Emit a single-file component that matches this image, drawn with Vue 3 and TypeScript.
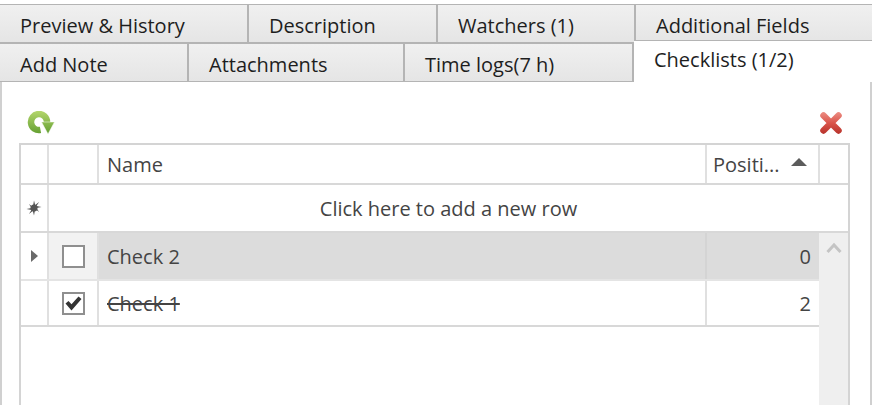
<script setup lang="ts">
interface Tab {
  label: string
  width: number
  active?: boolean
}

interface CheckRow {
  name: string
  position: number
  done: boolean
  current: boolean
}

const topTabs: Tab[] = [
  { label: 'Preview & History', width: 249 },
  { label: 'Description', width: 189 },
  { label: 'Watchers (1)', width: 198 },
  { label: 'Additional Fields', width: 236 },
]

const bottomTabs: Tab[] = [
  { label: 'Add Note', width: 189 },
  { label: 'Attachments', width: 216 },
  { label: 'Time logs(7 h)', width: 229 },
  { label: 'Checklists (1/2)', width: 238, active: true },
]

const rows: CheckRow[] = [
  { name: 'Check 2', position: 0, done: false, current: true },
  { name: 'Check 1', position: 2, done: true, current: false },
]
</script>

<template>
  <div class="page">
    <div class="tab-row">
      <div v-for="tab in topTabs" :key="tab.label" class="tab" :style="{ width: `${tab.width}px` }">
        {{ tab.label }}
      </div>
    </div>
    <div class="tab-row">
      <div
        v-for="tab in bottomTabs"
        :key="tab.label"
        class="tab"
        :class="{ 'tab--active': tab.active }"
        :style="{ width: `${tab.width}px` }"
      >
        {{ tab.label }}
      </div>
    </div>

    <div class="panel">
      <div class="toolbar">
        <svg class="icon-refresh" width="28" height="24" viewBox="0 0 28 24">
          <defs>
            <linearGradient id="greenFill" gradientUnits="userSpaceOnUse" x1="0" y1="0" x2="0" y2="24">
              <stop offset="0" stop-color="#b4d66c" />
              <stop offset="1" stop-color="#5f9c2e" />
            </linearGradient>
          </defs>
          <path
            d="M13.500 18.900A8 8 0 1 1 20 11"
            fill="none"
            stroke="url(#greenFill)"
            stroke-width="6.500"
          />
          <path d="M14.500 11h13L21 23z" fill="url(#greenFill)" stroke="#fff" stroke-width=".5" />
        </svg>
        <svg class="icon-delete" width="24" height="24" viewBox="0 0 24 24">
          <defs>
            <linearGradient id="redFill" gradientUnits="userSpaceOnUse" x1="0" y1="0" x2="0" y2="24">
              <stop offset="0" stop-color="#ee9389" />
              <stop offset=".5" stop-color="#da554b" />
              <stop offset="1" stop-color="#b42f28" />
            </linearGradient>
          </defs>
          <path
            d="M4.500 4.500l15 15M19.500 4.500l-15 15"
            fill="none"
            stroke="url(#redFill)"
            stroke-width="6.500"
            stroke-linecap="round"
          />
        </svg>
      </div>

      <div class="grid">
        <div class="head">
          <div class="cell cell--indicator" />
          <div class="cell cell--check" />
          <div class="cell cell--name">Name</div>
          <div class="cell cell--position">
            <span>Positi...</span>
            <i class="sort-arrow" />
          </div>
          <div class="cell cell--spare" />
        </div>

        <div class="new-row">
          <div class="cell cell--indicator">
            <svg width="16" height="16" viewBox="0 0 16 16">
              <path
                d="M8 .5l1.200 4.500 3.900-2.900-2.600 3.900 5 1-5 1 2.600 3.900-3.900-2.900L8 15.500 6.800 11l-3.900 2.900 2.600-3.900-5-1 5-1-2.600-3.900 3.900 2.900z"
                fill="#555"
              />
              <circle cx="8" cy="8" r="3.500" fill="#555" />
            </svg>
          </div>
          <div class="new-row__text">Click here to add a new row</div>
        </div>

        <div class="body">
          <div class="rows">
            <div v-for="row in rows" :key="row.name" class="row" :class="{ 'row--current': row.current }">
              <div class="cell cell--indicator">
                <i v-if="row.current" class="row-arrow" />
              </div>
              <div class="cell cell--check">
                <span class="checkbox">
                  <svg v-if="row.done" width="19" height="19" viewBox="0 0 19 19">
                    <path d="M1.500 9.500l3-2.600 3 3.300 7-7.700 3 2.600-10 11.400z" fill="#333" />
                  </svg>
                </span>
              </div>
              <div class="cell cell--name">
                <span :class="{ 'text-done': row.done }">{{ row.name }}</span>
              </div>
              <div class="cell cell--position cell--number">{{ row.position }}</div>
            </div>
          </div>
          <div class="scrollbar">
            <svg width="16" height="12" viewBox="0 0 16 12">
              <path d="M1.500 10L8 3l6.500 7" fill="none" stroke="#c4c4c4" stroke-width="3" />
            </svg>
          </div>
        </div>
      </div>
    </div>
  </div>
</template>

<style scoped>
.page {
  width: 872px;
  height: 405px;
  padding-top: 4px;
  box-sizing: border-box;
  display: flex;
  flex-direction: column;
  overflow: hidden;
  background: #fff;
  color: #333;
  font-family: "Open Sans", "Noto Sans", sans-serif;
  font-size: 20px;
}

.tab-row {
  display: flex;
  flex: none;
  height: 39px;
}

.tab {
  box-sizing: border-box;
  padding: 4px 0 0 20px;
  border-top: 1px solid #b4b4b4;
  border-bottom: 1px solid #b4b4b4;
  border-right: 2px solid #b4b4b4;
  background: linear-gradient(#f0f0f0, #e5e5e5);
  color: #1e1e1e;
  line-height: 33px;
  white-space: nowrap;
}

.tab:last-child {
  border-right: none;
}

.tab--active {
  height: 43px;
  margin-top: -3px;
  border: none;
  border-top: 1px solid #b4b4b4;
  background: #fff;
  line-height: 38px;
  padding-top: 0;
}

.panel {
  flex: 1;
  min-height: 0;
  display: flex;
  flex-direction: column;
  border-left: 2px solid #d0d0d0;
  border-right: 2px solid #d0d0d0;
  padding: 0 20px 0 17px;
}

.toolbar {
  flex: none;
  height: 61px;
  display: flex;
  align-items: flex-end;
  justify-content: space-between;
}

.icon-refresh {
  margin: 0 0 8px 8px;
}

.icon-delete {
  margin: 0 7px 8px 0;
}

.grid {
  flex: 1;
  min-height: 0;
  display: flex;
  flex-direction: column;
  border: 2px solid #d4d4d4;
  border-bottom: none;
  color: #444;
}

.head,
.new-row,
.row {
  display: flex;
  flex: none;
  box-sizing: border-box;
  border-bottom: 2px solid #d8d8d8;
}

.head {
  height: 40px;
}

.new-row {
  height: 48px;
}

.row {
  height: 48px;
}

.row:last-child {
  height: 46px;
}

.cell {
  box-sizing: border-box;
  display: flex;
  align-items: center;
  flex: none;
  border-right: 2px solid #e0e0e0;
}

.cell--indicator {
  width: 28px;
  justify-content: center;
}

.cell--check {
  width: 50px;
  justify-content: center;
}

.cell--name {
  width: 608px;
  padding-left: 8px;
}

.cell--position {
  width: 113px;
  padding: 0 8px 0 6px;
  justify-content: space-between;
}

.cell--number {
  justify-content: flex-end;
}

.cell--spare {
  flex: 1;
  border-right: none;
}

.sort-arrow {
  width: 0;
  height: 0;
  margin-right: 3px;
  margin-bottom: 4px;
  border-left: 8px solid transparent;
  border-right: 8px solid transparent;
  border-bottom: 8px solid #5c5c5c;
}

.new-row__text {
  flex: 1;
  display: flex;
  align-items: center;
  justify-content: center;
}

.body {
  flex: 1;
  min-height: 0;
  display: flex;
}

.rows {
  flex: none;
  width: 798px;
}

.row--current {
  border-bottom-color: #e4e4e4;
}

.row--current .cell--check {
  background: #f2f2f2;
}

.row--current .cell--name,
.row--current .cell--position {
  background: #dcdcdc;
}

.row--current .cell--name {
  border-right-color: #d4d4d4;
}

.row .cell--position {
  width: 112px;
  border-right: none;
}

.row-arrow {
  width: 0;
  height: 0;
  border-top: 6px solid transparent;
  border-bottom: 6px solid transparent;
  border-left: 7px solid #6a6a6a;
}

.checkbox {
  box-sizing: border-box;
  width: 23px;
  height: 23px;
  display: flex;
  align-items: center;
  justify-content: center;
  border: 2px solid #8f8f8f;
  background: #fff;
}

.text-done {
  text-decoration: line-through;
}

.scrollbar {
  flex: 1;
  display: flex;
  justify-content: center;
  padding-top: 9px;
  background: #efefef;
}

.scrollbar svg {
  display: block;
}
</style>
